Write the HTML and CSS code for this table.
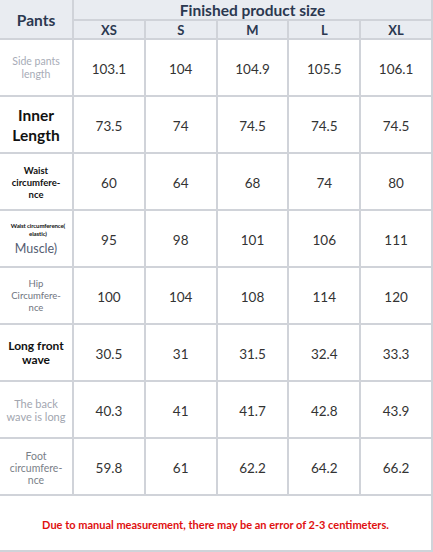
FILE: index.html
```html
<!DOCTYPE html>
<html>
<head>
<meta charset="utf-8">
<link rel="stylesheet" href="styles.css">
</head>
<body>
<div class="chart">
  <div class="hd corner">Pants</div>
  <div class="hd title">Finished product size</div>
  <div class="hd size">XS</div>
  <div class="hd size">S</div>
  <div class="hd size">M</div>
  <div class="hd size">L</div>
  <div class="hd size">XL</div>

  <div class="lb l-side">Side pants<br>length</div>
  <div class="v">103.1</div><div class="v">104</div><div class="v">104.9</div><div class="v">105.5</div><div class="v">106.1</div>

  <div class="lb l-inner">Inner<br>Length</div>
  <div class="v">73.5</div><div class="v">74</div><div class="v">74.5</div><div class="v">74.5</div><div class="v">74.5</div>

  <div class="lb l-waist">Waist<br>circumfere-<br>nce</div>
  <div class="v">60</div><div class="v">64</div><div class="v">68</div><div class="v">74</div><div class="v">80</div>

  <div class="lb l-elastic"><span class="tiny">Waist circumference(<br>elastic)</span><span class="muscle">Muscle)</span></div>
  <div class="v">95</div><div class="v">98</div><div class="v">101</div><div class="v">106</div><div class="v">111</div>

  <div class="lb l-hip">Hip<br>Circumfere-<br>nce</div>
  <div class="v">100</div><div class="v">104</div><div class="v">108</div><div class="v">114</div><div class="v">120</div>

  <div class="lb l-front">Long front<br>wave</div>
  <div class="v">30.5</div><div class="v">31</div><div class="v">31.5</div><div class="v">32.4</div><div class="v">33.3</div>

  <div class="lb l-back">The back<br>wave is long</div>
  <div class="v">40.3</div><div class="v">41</div><div class="v">41.7</div><div class="v">42.8</div><div class="v">43.9</div>

  <div class="lb l-foot">Foot<br>circumfere-<br>nce</div>
  <div class="v">59.8</div><div class="v">61</div><div class="v">62.2</div><div class="v">64.2</div><div class="v">66.2</div>

  <div class="note">Due to manual measurement, there may be an error of 2-3 centimeters.</div>
</div>
</body>
</html>
```
FILE: styles.css
```css
* { box-sizing: border-box; }
html, body { margin: 0; padding: 0; background: #fff; }
body { font-family: Lato, "Open Sans", sans-serif; }

.chart {
  width: 433px;
  height: 552px;
  display: grid;
  grid-template-columns: 72px repeat(5, 1fr);
  grid-template-rows: 19px 17px repeat(8, 55px) 54px;
  gap: 2px;
  padding: 0 2px 2px 0;
  background: #d0d3d9;
}

.chart > div {
  display: flex;
  align-items: center;
  justify-content: center;
  text-align: center;
  background: #fff;
}

.hd {
  background: #e9ecf1 !important;
  color: #2b3850;
  font-weight: 700;
}
.corner {
  grid-row: 1 / 3;
  font-size: 15.5px;
  padding-top: 1px;
}
.title {
  grid-column: 2 / 7;
  font-size: 15.5px;
  line-height: 18px;
}
.size {
  font-size: 13px;
  padding-top: 1px;
}

.v {
  font-size: 13.5px;
  color: #333;
  padding-top: 2px;
}

.lb { flex-direction: column; }

.l-side { color: #a7acb7; font-size: 10.5px; line-height: 13px; }
.l-inner { color: #111; font-size: 15.5px; font-weight: 700; line-height: 20px; }
.l-waist { color: #111; font-size: 9.5px; font-weight: 700; line-height: 12px; padding-top: 2px; }
.l-elastic { color: #111; }
.l-elastic .tiny { font-size: 6px; font-weight: 700; line-height: 8px; margin-left: 4px; padding-top: 2px; letter-spacing: -0.1px; }
.l-elastic .muscle { font-size: 12.5px; color: #545d72; line-height: 16px; margin-top: 3px; }
.l-hip { color: #6f7480; font-size: 9.5px; line-height: 12px; }
.l-front { color: #111; font-size: 12px; font-weight: 700; line-height: 14px; }
.l-back { color: #a2a6b0; font-size: 11px; line-height: 13px; }
.l-foot { color: #7a7f88; font-size: 10.5px; line-height: 12px; padding-top: 2px; }

.note {
  grid-column: 1 / 7;
  color: #e01010;
  font-size: 11px;
  font-weight: 700;
  padding-top: 2px;
}
```
